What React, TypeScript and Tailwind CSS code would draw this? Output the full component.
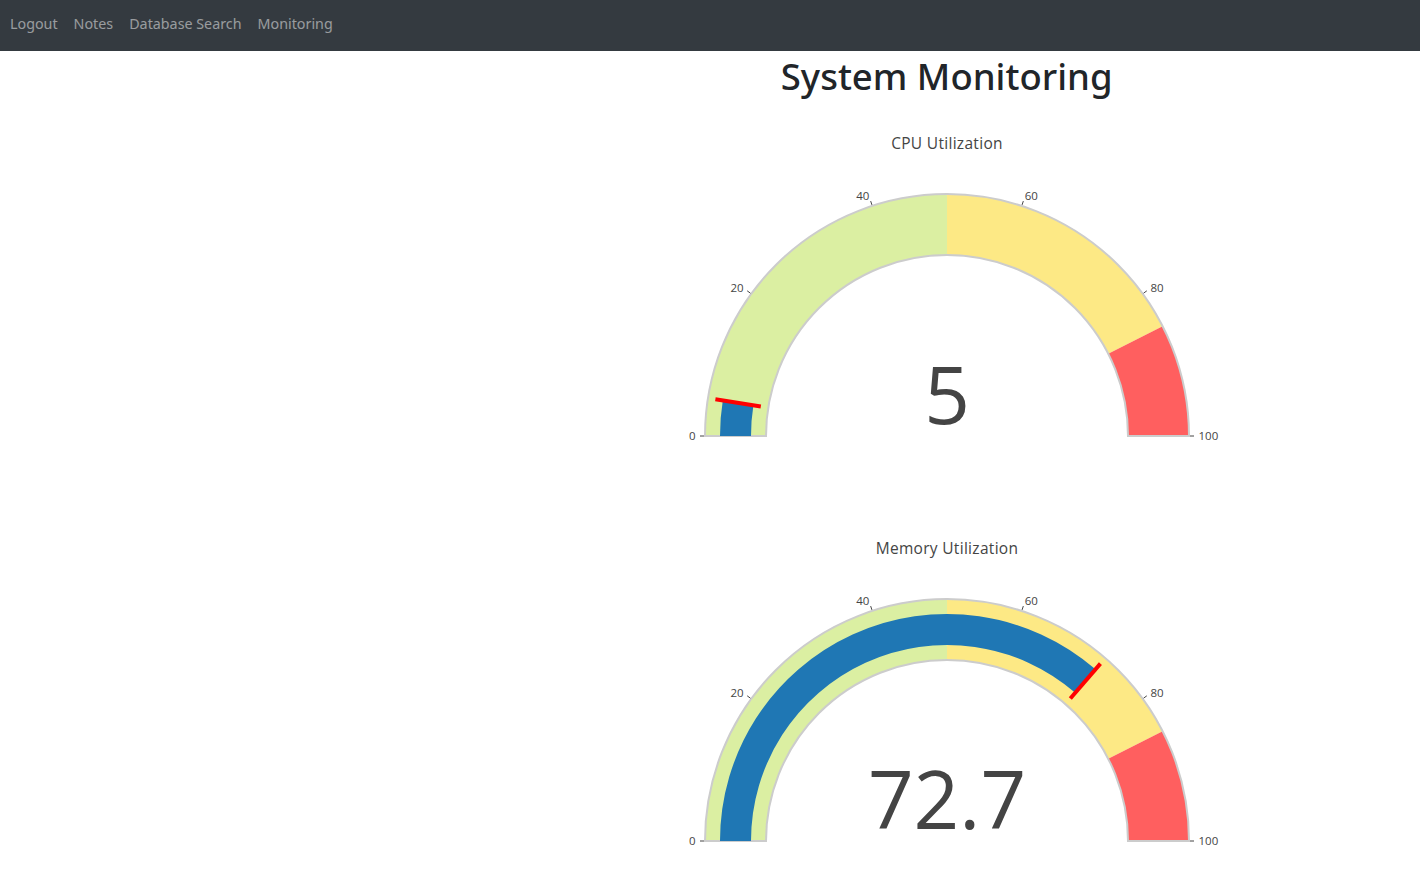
import React from 'react';

const CX = 280;
const CY = 335;
const R_OUT = 242;
const R_IN = 181;

const polar = (v: number, r: number) => {
  const t = Math.PI * (1 - v / 100);
  return [CX + r * Math.cos(t), CY - r * Math.sin(t)];
};

// annular sector from value a to value b
const sector = (a: number, b: number, r1: number, r2: number) => {
  const [x1, y1] = polar(a, r2);
  const [x2, y2] = polar(b, r2);
  const [x3, y3] = polar(b, r1);
  const [x4, y4] = polar(a, r1);
  return `M${x1} ${y1} A${r2} ${r2} 0 0 1 ${x2} ${y2} L${x3} ${y3} A${r1} ${r1} 0 0 0 ${x4} ${y4} Z`;
};

const steps = [
  { from: 0, to: 50, color: '#dbefa2' },
  { from: 50, to: 85, color: '#fde985' },
  { from: 85, to: 100, color: '#ff5f5f' },
];

const ticks = [0, 20, 40, 60, 80, 100];

const Gauge: React.FC<{ title: string; value: number }> = ({ title, value }) => {
  const [tx1, ty1] = polar(value, 188.5);
  const [tx2, ty2] = polar(value, 234.5);
  return (
    <svg width={560} height={405} className="block" style={{ fontFamily: '"Open Sans", Verdana, Arial, sans-serif' }}>
      <text x={CX} y={48} textAnchor="middle" fontSize={15.5} fill="#444" letterSpacing={0.3}>
        {title}
      </text>
      {steps.map((s) => (
        <path key={s.from} d={sector(s.from, s.to, R_IN, R_OUT)} fill={s.color} />
      ))}
      <path d={sector(0, 100, R_IN, R_OUT)} fill="none" stroke="#cccccc" strokeWidth={2} />
      <path d={sector(0, value, 196, 227)} fill="#1f77b4" />
      <line x1={tx1} y1={ty1} x2={tx2} y2={ty2} stroke="#ff0000" strokeWidth={4} />
      {ticks.map((t) => {
        const [a1, b1] = polar(t, R_OUT + 1);
        const [a2, b2] = polar(t, R_OUT + 5);
        const [lx, ly] = polar(t, R_OUT + 9.5);
        const anchor = t < 50 ? 'end' : t > 50 ? 'start' : 'middle';
        return (
          <g key={t}>
            <line x1={a1} y1={b1} x2={a2} y2={b2} stroke="#444" strokeWidth={1} />
            <text x={lx} y={ly + 3.5} textAnchor={anchor} fontSize={11.5} fill="#444">
              {t}
            </text>
          </g>
        );
      })}
      <text x={CX} y={323} textAnchor="middle" fontSize={80} fill="#444">
        {value}
      </text>
    </svg>
  );
};

const App: React.FC = () => {
  const links = ['Logout', 'Notes', 'Database Search', 'Monitoring'];

  return (
    <div className="min-h-screen bg-white font-['Noto_Sans',sans-serif]">
      <nav className="h-[51px] bg-[#343a40] flex items-center pl-[2px] pb-[4px]">
        {links.map((l) => (
          <a key={l} href="#" className="px-2 text-[14.3px] text-white/50 hover:text-white/75">
            {l}
          </a>
        ))}
      </nav>

      <div className="grid grid-cols-3">
        <div />
        <div className="col-span-2 flex flex-col items-center">
          <h1 className="text-[36.5px] leading-[50px] font-medium text-[#212529]">System Monitoring</h1>
          <Gauge title="CPU Utilization" value={5} />
          <Gauge title="Memory Utilization" value={72.7} />
        </div>
      </div>
    </div>
  );
};

export default App;
